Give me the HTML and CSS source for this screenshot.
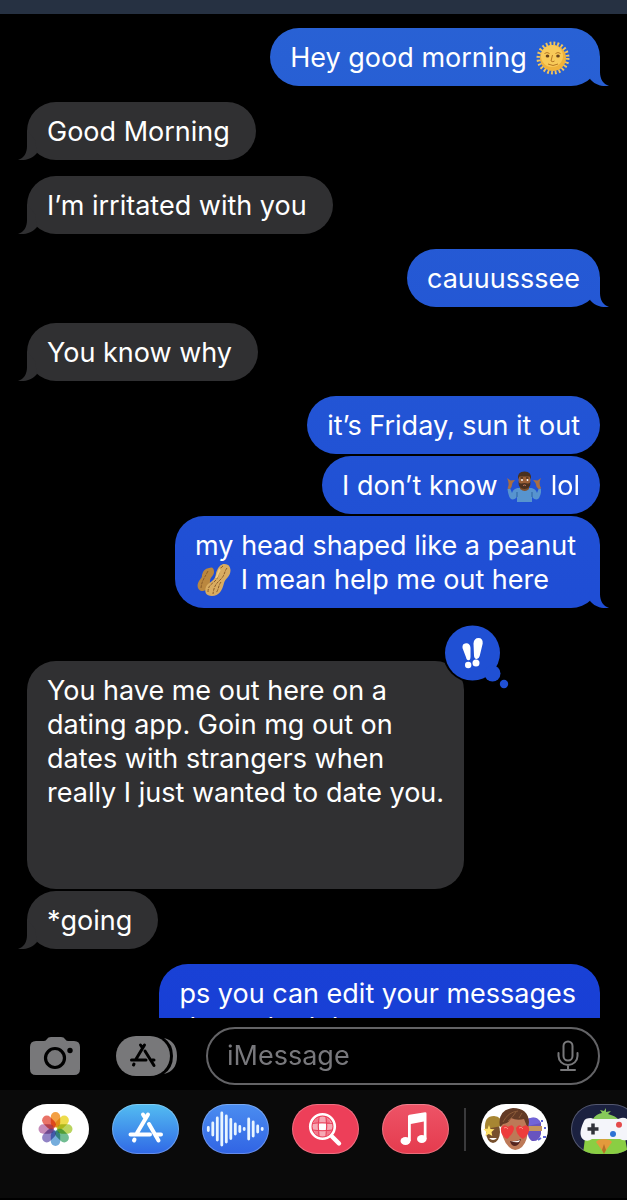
FILE: index.html
```html
<!DOCTYPE html>
<html lang="en">
<head>
<meta charset="utf-8">
<meta name="viewport" content="width=device-width, initial-scale=1">
<title>Messages</title>
<link rel="stylesheet" href="styles.css">
</head>
<body>
<div class="screen">
  <header class="topbar"></header>
  <main class="chat">
    <div class="msg sent tail">Hey good morning <svg class="emoji" role="img" aria-label="sun with face" viewBox="0 0 34 34"><circle cx="17" cy="17" r="14.5" fill="none" stroke="#f3c55c" stroke-width="4" stroke-dasharray="1.8 1.996"/><circle cx="17" cy="17" r="13" fill="#efb23c"/><circle cx="16" cy="15" r="11" fill="#f8ca59"/><path d="M8.500 12.500q2.500-2 5 0M19.500 12.500q2.500-2 5 0M16.500 14l-1.500 6q2 1.500 3.500 0M12 23q5 3 10 0" fill="none" stroke="#b87924" stroke-width="1"/><ellipse cx="11.500" cy="15" rx="1.800" ry="1.500" fill="#66421b"/><ellipse cx="22" cy="15" rx="1.800" ry="1.500" fill="#66421b"/></svg>&nbsp;</div>
    <div class="msg received tail">Good Morning</div>
    <div class="msg received tail">I’m irritated with you</div>
    <div class="msg sent tail">cauuusssee</div>
    <div class="msg received tail">You know why</div>
    <div class="msg sent">it’s Friday, sun it out</div>
    <div class="msg sent joined">I don’t know <svg class="emoji" role="img" aria-label="man shrugging" viewBox="0 0 34 34"><path d="M10.500 19Q6 20 5 24l-2-5-2.500 1q1 10 5 10.500 3 0 4.500-3v5.500h15v-5.500q1.500 3 4.500 3 4-.5 5-10.500L32 19l-2 5q-1-4-5.500-5z" fill="#5794cf"/><path d="M10 23v5M25 23v5" stroke="#326ca7" stroke-width="1.200"/><path d="M13 17h9v3q-4 4-9 0z" fill="#82502d"/><path d="M.5 19.500Q3 15 0 9l3.500 2.500L8 11l-2.500 3Q5 18 3 20zM34.500 19.500Q31 15 34 9l-3.500 2.500L26 11l2.500 3q.5 4 3 6z" fill="#a86e43"/><ellipse cx="17.500" cy="11" rx="6" ry="7.500" fill="#9b6038"/><path d="M11 10.500Q10 2.500 17.500 2.500T24 10.500l-1.500-3h-10zM11.500 12q.5 3 3 2.500 3-1 6 0 2.500.5 3-2.500.5 8-6 8t-6-8z" fill="#49301f"/><path d="M13.500 9h2.500M19 9h2.500" stroke="#2a1a10"/><circle cx="15" cy="11" r=".9" fill="#fff"/><circle cx="20.500" cy="11" r=".9" fill="#fff"/><path d="M16 16.500q1.500-1 3 0" stroke="#c6765d" fill="none"/></svg> lol</div>
    <div class="msg sent tail joined multi">my head shaped like a peanut<br><svg class="emoji" role="img" aria-label="peanuts" viewBox="0 0 34 34"><path d="M12 5Q17 3 17 9c0 4-4 5-4 9 0 5-2 9-7 10-5 0-7-5-4-10 2-3 3-3 3-6q1-6 7-7z" fill="#ba873f"/><path d="M26 1q7-1 7.500 6c0 7-5 8-6.500 13-1.500 7-5 13-12 13-6 0-8-4-6-9s8-5 9.500-11Q20 3 26 1z" fill="#d9ac61"/><path d="M26 3c-6 4-2 10-9 16-4 3-6 5-6 10M30 5c-3 4-2 7-6 11s-7 6-8 15M11 8c-4 8-6 9-7 17M24 19c-3 4-2 7-5 11" fill="none" stroke="#8a5c29" stroke-width="1" stroke-dasharray="3 1"/><path d="M23 6c-2 4-2 6-4 9" fill="none" stroke="#f1ce86" stroke-width="2"/></svg> I mean help me out here</div>
    <div class="msg received reacted">You have me out here on a<br>dating app. Goin mg out on<br>dates with strangers when<br>really I just wanted to date you.<br><br>&nbsp;<svg class="reaction" role="img" aria-label="Emphasized" viewBox="0 0 68 68"><circle cx="29.500" cy="29" r="29.500" fill="#000"/><g fill="#2050d4"><circle cx="29.500" cy="29" r="27.500"/><circle cx="49.500" cy="49.500" r="8"/><circle cx="61" cy="60" r="4.200"/></g><g fill="#fff"><path d="M19.500 24Q19 19.500 23 19.200t4.500 4.500v9q0 3.500-2 3.500t-2.500-3zM30.500 19.500q.5-5.500 5-5.500t4.200 5.500l-3 12.500q-.9 3.200-3.200 3t-2.500-3.500z"/><circle cx="25.200" cy="41" r="3.200"/><circle cx="33" cy="39" r="3.500"/></g></svg></div>
    <div class="msg received tail joined">*going</div>
    <div class="msg sent multi">ps you can edit your messages<br>dunno had the</div>
  </main>

  <form class="composer">
    <button class="tool" type="button" aria-label="Camera"><svg width="50" height="40" viewBox="0 0 50 40"><path d="M6 5h8q2 0 3-2t4-2h10q3 0 4 2t3 2h6q6 0 6 6v22q0 6-6 6H6q-6 0-6-6V11q0-6 6-6z" fill="#78787a"/><circle cx="25" cy="22" r="9.500" fill="none" stroke="#000" stroke-width="3.200"/><circle cx="40" cy="14.500" r="2.700" fill="#000"/></svg></button>
    <button class="tool apps" type="button" aria-label="Apps"><svg width="62" height="40" viewBox="0 0 62 40"><rect width="54" height="40" rx="20" fill="#78787a"/><path d="M48 2Q61 5 61 20T48 38Q57 32 57 20T48 2z" fill="#78787a"/><g stroke="#000" stroke-width="3" stroke-linecap="round" fill="none"><path d="M28.500 9L19.500 24M24.500 9l2 3M29 15l9 14.500M15.500 24h14.500M36 24h2M18 28l-.5 1"/></g></svg></button>
    <div class="field"><input class="text" type="text" placeholder="iMessage" aria-label="iMessage"><button class="tool" type="button" aria-label="Dictate"><svg width="22" height="32" viewBox="0 0 22 32" fill="none" stroke="#78787a" stroke-width="2" stroke-linecap="round"><rect x="6.500" y="1.500" width="9" height="19" rx="4.500"/><path d="M1.500 13v3a9.500 9 0 0 0 19 0v-3M11 25v5M4 30h14"/></svg></button></div>
  </form>

  <nav class="drawer" aria-label="iMessage apps">
    <button class="app photos" type="button" aria-label="Photos"><svg viewBox="0 0 67 50"><g transform="translate(33.500 25)" class="petals"><rect x="-4.700" y="-17" width="9.400" height="15.500" rx="4.700" fill="#f3a044"/><rect x="-4.700" y="-17" width="9.400" height="15.500" rx="4.700" fill="#eddc4c" transform="rotate(45)"/><rect x="-4.700" y="-17" width="9.400" height="15.500" rx="4.700" fill="#b9d45e" transform="rotate(90)"/><rect x="-4.700" y="-17" width="9.400" height="15.500" rx="4.700" fill="#71bd92" transform="rotate(135)"/><rect x="-4.700" y="-17" width="9.400" height="15.500" rx="4.700" fill="#75addc" transform="rotate(180)"/><rect x="-4.700" y="-17" width="9.400" height="15.500" rx="4.700" fill="#9183c5" transform="rotate(225)"/><rect x="-4.700" y="-17" width="9.400" height="15.500" rx="4.700" fill="#c58bb9" transform="rotate(270)"/><rect x="-4.700" y="-17" width="9.400" height="15.500" rx="4.700" fill="#e97367" transform="rotate(315)"/></g></svg></button>
    <button class="app store" type="button" aria-label="App Store"><svg viewBox="0 0 67 50" fill="none" stroke="#fff" stroke-width="4" stroke-linecap="round"><path d="M36 10.500L25 29M31 10.500l2.500 4M37 20l9.500 16.500M18.500 30.500h19.500M44.500 30.500h4.500M22.500 35.500l-.5 1"/></svg></button>
    <button class="app audio" type="button" aria-label="Audio"><svg viewBox="0 0 67 50" stroke="#e8f5ff" stroke-width="2.800" stroke-linecap="round"><path d="M6.300 23.500v3M10.800 19v12M15.300 14v22M19.800 9v32M24.300 12v26M28.800 15.500v19M33.300 20v10M37.800 22.500v5M42.200 24.500v1M46.700 15v20M51.200 18v14M55.700 22v6M60.200 24.500v1"/></svg></button>
    <button class="app images" type="button" aria-label="Image search"><svg viewBox="0 0 67 50" fill="none" stroke="#fff"><circle cx="30.500" cy="22.500" r="12.300" stroke-width="2.600"/><path d="M40 32.500l7 7" stroke-width="4.400" stroke-linecap="round"/><circle cx="30.500" cy="22.500" r="10" fill="#f6a9b5" stroke="none"/><path d="M22 19q0-3 4-5v5zM34 13l4 4v3h-4zM22 26h5v6q-4-2-5-6zM34 26h6l-5 6z" fill="#f2788b" stroke="none"/><path d="M26.500 19.500h7.500v6.500h-7.500z" fill="#fff" stroke="none"/><path d="M20.500 19.500q9-1.500 20 0M20.500 26q10 1.500 20 0M27 13q-1.500 9 0 19M34 13q1.500 9 0 19" stroke="#e8415b" stroke-width="1.200"/></svg></button>
    <button class="app music" type="button" aria-label="Music"><svg viewBox="0 0 67 50" fill="#fff"><path d="M26 12.500q0-1.500 1.500-1.800L43 8.200q1.500-.2 1.500 1.300V35h-2.700V17.500l-13 2.500v17H26z"/><ellipse cx="23.500" cy="37" rx="5" ry="4"/><ellipse cx="39.800" cy="35" rx="4.800" ry="4"/></svg></button>
    <span class="rule"></span>
    <button class="app memoji" type="button" aria-label="Memoji"><svg viewBox="0 0 67 50"><ellipse cx="12" cy="28" rx="7" ry="11" fill="#77502d"/><path d="M4 25q-1-13 9-13 8 0 8 10z" fill="#a78632"/><path d="M8 21l1.500 4 4 .2-3 2.800.8 4-3.500-2-3.500 2 1-4-2.800-3 4-.2z" fill="#ffe16a"/><path d="M8 34q4 4 8 0z" fill="#fff"/><path d="M46 16q9-6 14 3v11q-2 8-9 7-6-3-5-21z" fill="#6854bf"/><path d="M47 22h14v5H47z" fill="#c4945d"/><path d="M46 15q9-4 14 4l-13 3z" fill="#7164d9"/><path d="M61 16v2M64 23v2M62 33h3M57 36l3-2" stroke="#5a62d5" stroke-width="2"/><path d="M20 19q1-9 14-9t13 9q1 17-6 24-7 6-13 0-8-8-8-24z" fill="#bd7957"/><path d="M19 23Q16 6 32 4q15 0 16 14l-1 7-4-10q-7 2-13-1-2 5-8 6z" fill="#633a25"/><path d="M22 18Q27 8 37 7M27 17q5-4 8-9M38 14l3-5" stroke="#8c5b39" stroke-width="1" fill="none"/><path d="M20 24q3-5 7-1 5-4 6 1 0 5-7 11-7-4-6-11zM35 24q3-5 6-1 5-4 7 1 1 6-6 11-7-4-7-11z" fill="#ed3c3c"/><path d="M23 24q2-2 4 1M38 24q2-2 4 1" stroke="#ff8c80" fill="none"/><path d="M29 37q6 1 11-2-2 7-6 7t-5-5z" fill="#54241f"/><path d="M30 37q5 1 9-1l-1 2q-4 1-8-1z" fill="#fff"/></svg></button>
    <button class="app pigeon" type="button" aria-label="GamePigeon"><svg viewBox="0 0 67 50"><path d="M22 15q3-5 9-6l-2-3 4 1 2-3v4l5-1-3 3q8 2 11 6z" fill="#87c95a"/><path d="M14 34q20-8 40 0l3 16H12z" fill="#8ace43"/><path d="M13 17q1-3 7-3l3 1h24l3-1q7-1 8 5 4 14-2 17-4 1-7-1H21q-4 3-8 1-7-4 0-19z" fill="#f4f5fa"/><path d="M22 19.500v11M16.500 25h11" stroke="#30323a" stroke-width="3.500"/><circle cx="48" cy="20.700" r="3" fill="#e44a4a"/><circle cx="42" cy="30" r="3" fill="#2e72d4"/><path d="M25 38q2-3 8-3t8 3l-5 7-3 4-3-4z" fill="#e39a3c"/><path d="M33 40l-2 6 2 4 2-4z" fill="#b86f26"/></svg></button>
  </nav>
</div>
</body>
</html>
```
FILE: styles.css
```css
* { box-sizing: border-box; }
body {
  margin: 0;
  background: #000;
  color: #fff;
  font-family: Inter, "Liberation Sans", sans-serif;
  font-size: 27px;
  line-height: 34px;
}
.screen {
  display: flex;
  flex-direction: column;
  height: 100vh;
  overflow: hidden;
}
.topbar {
  flex: none;
  height: 14px;
  background: #263142;
}
.chat {
  flex: 1;
  min-height: 0;
  overflow: hidden;
  display: flex;
  flex-direction: column;
  align-items: flex-start;
  padding: 0 27px;
}
.msg {
  position: relative;
  flex: none;
  padding: 13px 20px 11px;
  border-radius: 29px;
  white-space: nowrap;
}
.received {
  margin-top: 16px;
  padding-right: 26px;
  background: #303032;
}
.sent {
  align-self: flex-end;
  margin-top: 15px;
  background: linear-gradient(#2962d4, #1539d6) fixed;
}
.multi { padding-right: 24px; }
.msg:first-child { margin-top: 14px; }
.joined { margin-top: 2px; }
.reacted {
  margin-top: 53px;
  padding-right: 20px;
}
.tail::after {
  content: "";
  position: absolute;
  bottom: 0;
  width: 24px;
  height: 30px;
  background: inherit;
}
.sent.tail::after {
  right: -10px;
  clip-path: path("M14 0V16C14 23 17 28 23 30C15 31 8 28 4 23L6 10Z");
}
.received.tail::after {
  left: -10px;
  clip-path: path("M10 0V16C10 23 7 28 1 30C9 31 16 28 20 23L18 10Z");
}
.emoji {
  width: 34px;
  height: 34px;
  margin: 0 2px;
  vertical-align: top;
}
.reaction {
  position: absolute;
  top: -37px;
  right: -47px;
  width: 68px;
  height: 68px;
}
button {
  margin: 0;
  padding: 0;
  border: 0;
  background: none;
}
.tool { flex: none; display: flex; }
.composer {
  flex: none;
  display: flex;
  align-items: center;
  gap: 28px;
  padding: 9px 27px 5px 30px;
}
.apps { margin-left: 8px; }
.field {
  flex: 1;
  min-width: 0;
  display: flex;
  align-items: center;
  height: 58px;
  padding: 0 19px;
  border: 2px solid #636366;
  border-radius: 29px;
}
.text {
  flex: 1;
  width: 100%;
  min-width: 0;
  padding: 0;
  border: 0;
  outline: 0;
  background: none;
  color: #fff;
  font: inherit;
}
.text::placeholder { color: #78787c; opacity: 1; }
.drawer {
  flex: none;
  display: flex;
  align-items: center;
  gap: 23px;
  height: 110px;
  padding: 2px 22px 32px;
  overflow: hidden;
  border-bottom: 2px solid #000;
  background: #0a0a0a;
}
.app {
  flex: none;
  width: 67px;
  height: 50px;
  border-radius: 25px;
  overflow: hidden;
  box-shadow: inset 0 0 0 1px rgba(255, 255, 255, 0.25);
}
.app svg { display: block; width: 100%; height: 100%; }
.petals rect { mix-blend-mode: multiply; }
.photos, .memoji { background: #fff; }
.store { background: linear-gradient(#53bdf1, #3068e6); }
.audio { background: linear-gradient(#4b8df0, #3164e4); }
.images { background: #ed3f59; }
.music { background: linear-gradient(#ed5467, #e53b4e); }
.pigeon { background: #1b2140; }
.rule {
  flex: none;
  width: 2px;
  height: 43px;
  margin: 0 -8px;
  background: #3a3a3c;
}
```
